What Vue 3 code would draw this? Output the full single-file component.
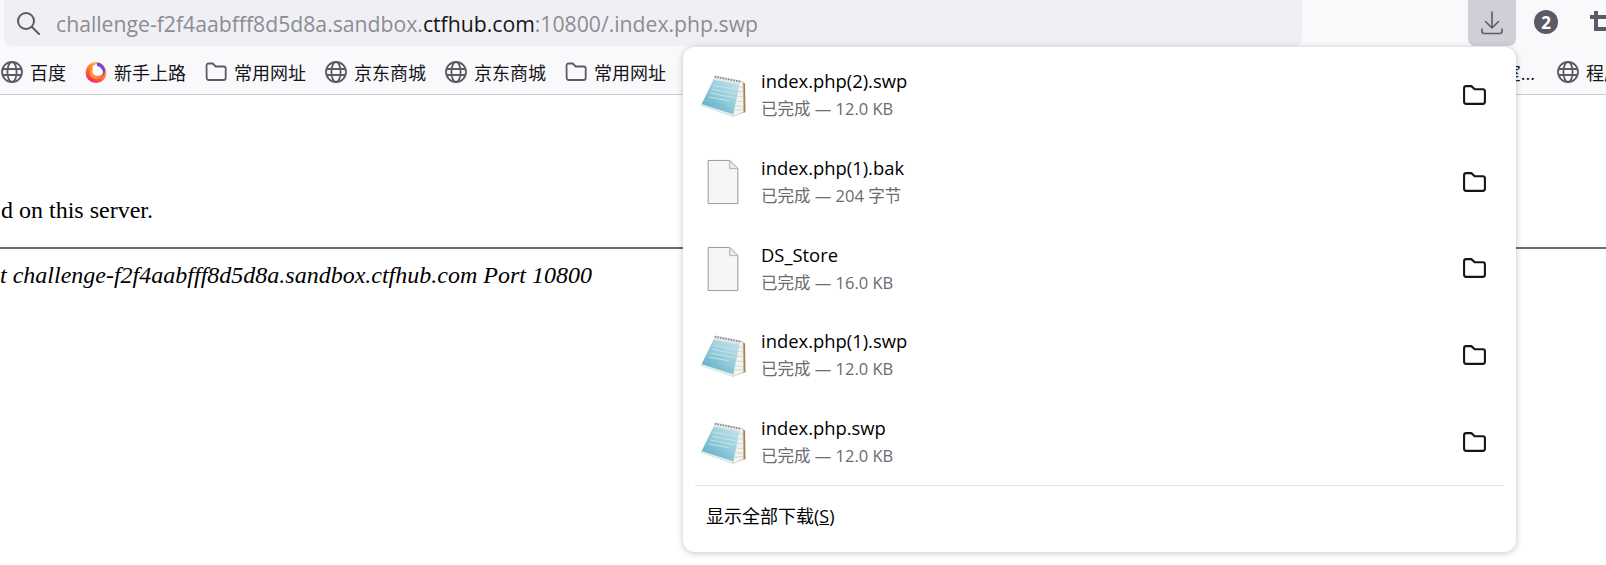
<template>
  <div class="page">
    <header class="toolbar">
      <div class="urlbar">
        <svg class="search" viewBox="0 0 24 24" fill="none" stroke="#5b5b66" stroke-width="2" stroke-linecap="round">
          <circle cx="10" cy="10" r="8" />
          <path d="M16 16 23 23" />
        </svg>
        <span class="url">challenge-f2f4aabfff8d5d8a.sandbox.<b>ctfhub.com</b>:10800/.index.php.swp</span>
      </div>
      <button type="button" class="dl-btn" aria-label="下载">
        <svg viewBox="0 0 24 24" fill="none" stroke="#5b5b66" stroke-width="1.6" stroke-linecap="round" stroke-linejoin="round">
          <path d="M12 1v16M5.500 10.500 12 17l6.500-6.500" />
          <path d="M2 18v2.500a2 2 0 0 0 2 2h16a2 2 0 0 0 2-2V18" />
        </svg>
      </button>
      <span class="badge">2</span>
      <svg class="crop" viewBox="0 0 24 24" fill="none" stroke="#5b5b66" stroke-width="4">
        <path d="M6 0v18h18M0 6h18v18" />
      </svg>
    </header>

    <nav class="bookmarks">
      <a v-for="b in bookmarks" :key="b.id" class="bm" :class="b.cls">
        <svg v-if="b.icon === 'globe'" class="bm-icon" viewBox="0 0 22 22" fill="none" stroke="#5b5b66" stroke-width="1.8">
          <circle cx="11" cy="11" r="10" />
          <ellipse cx="11" cy="11" rx="4.600" ry="10" />
          <path d="M1.500 8h19M1.500 14h19" />
        </svg>
        <svg v-else-if="b.icon === 'folder'" class="bm-icon" viewBox="0 0 22 22" fill="none" stroke="#5b5b66" stroke-width="1.8" stroke-linejoin="round">
          <path d="M1.500 4.500a2 2 0 0 1 2-2h4.200l3 3h8a2 2 0 0 1 2 2v9.500a2 2 0 0 1-2 2h-15a2 2 0 0 1-2-2z" />
        </svg>
        <svg v-else-if="b.icon === 'firefox'" class="bm-icon" viewBox="0 0 22 22">
          <defs>
            <linearGradient id="fx" x1="0.8" y1="0" x2="0.2" y2="1">
              <stop offset="0" stop-color="#ffd23c" />
              <stop offset="0.55" stop-color="#ff7139" />
              <stop offset="1" stop-color="#f5156c" />
            </linearGradient>
          </defs>
          <circle cx="11" cy="11.500" r="10.500" fill="url(#fx)" />
          <circle cx="12.500" cy="9" r="6" fill="#fff" />
          <path d="M12 1.500a8.500 8.500 0 0 1 8 9.500 8 8 0 0 1-3.500 5.500 7 7 0 0 0 .5-8 6.500 6.500 0 0 0-5-3.500z" fill="#7542e5" />
          <path d="M7.500 11a5.500 5.500 0 0 0 9 3.500 6.500 6.500 0 0 1-11 .5A7 7 0 0 1 8 6z" fill="#ff9a2e" />
        </svg>
        <span>{{ b.label }}</span>
      </a>
    </nav>

    <main class="content">
      <p class="msg">d on this server.</p>
      <hr class="rule" />
      <address class="addr">t challenge-f2f4aabfff8d5d8a.sandbox.ctfhub.com Port 10800</address>
    </main>

    <section class="panel">
      <ul class="list">
        <li v-for="f in files" :key="f.name" class="row">
          <svg v-if="f.kind === 'note'" class="file-icon" viewBox="0 0 48 48">
            <defs>
              <linearGradient id="np" x1="0" y1="1" x2="0.8" y2="0">
                <stop offset="0" stop-color="#4fa3bd" />
                <stop offset="0.55" stop-color="#93cbdb" />
                <stop offset="1" stop-color="#c6e4ec" />
              </linearGradient>
            </defs>
            <path d="M42 9 47 12 47.500 42 38 44z" fill="#a8814a" />
            <path d="M41 9 45 11 45.500 42 34 46.500z" fill="#f4f4ef" stroke="#b9b9b0" stroke-width="0.6" />
            <path d="M40 15 45 16M39 20 45 21M38 25 45 26M37 30 45 31M36 35 45 36M35.500 40 45 39" stroke="#c3d0d5" stroke-width="0.8" />
            <path d="M16 4 42 9 34 46.500 1 35z" fill="url(#np)" />
            <path d="M1 35 34 46.500 34.500 44 1.500 33.500z" fill="#e4eef0" />
            <path d="M15.500 3.500 42.500 8.500 41 13 14 8z" fill="#e3e6e6" />
            <path d="M15.500 5 42 10" stroke="#6e7a80" stroke-width="1.600" stroke-dasharray="1.500 1.300" />
            <path d="M14 14 39 18.500M12.500 18 38 23M11 22 37 27M9 26 30 30" stroke="#c4e4ec" stroke-width="1" />
          </svg>
          <svg v-else class="file-icon" viewBox="0 0 48 48">
            <path d="M8.500 1.500H31L39.500 10v36.500h-31z" fill="#f5f6f8" stroke="#959595" />
            <path d="M31 1.500V10h8.500z" fill="#ececec" stroke="#b0b0b0" />
          </svg>
          <div class="info">
            <div class="name">{{ f.name }}</div>
            <div class="meta">已完成 — {{ f.size }}</div>
          </div>
          <svg class="open" viewBox="0 0 24 24" fill="none" stroke="#15141a" stroke-width="2" stroke-linejoin="round">
            <path d="M2 5a2 2 0 0 1 2-2h5l3.200 3H20a2 2 0 0 1 2 2v10a2 2 0 0 1-2 2H4a2 2 0 0 1-2-2z" />
          </svg>
        </li>
      </ul>
      <div class="footer">显示全部下载(<u>S</u>)</div>
    </section>
  </div>
</template>

<script setup>
const bookmarks = [
  { id: 1, icon: 'globe', label: '百度' },
  { id: 2, icon: 'firefox', label: '新手上路' },
  { id: 3, icon: 'folder', label: '常用网址' },
  { id: 4, icon: 'globe', label: '京东商城' },
  { id: 5, icon: 'globe', label: '京东商城' },
  { id: 6, icon: 'folder', label: '常用网址' },
  { id: 7, icon: 'none', label: '工作室...', cls: 'tail' },
  { id: 8, icon: 'globe', label: '程序员导航', cls: 'far' },
]

const files = [
  { name: 'index.php(2).swp', size: '12.0 KB', kind: 'note' },
  { name: 'index.php(1).bak', size: '204 字节', kind: 'blank' },
  { name: 'DS_Store', size: '16.0 KB', kind: 'blank' },
  { name: 'index.php(1).swp', size: '12.0 KB', kind: 'note' },
  { name: 'index.php.swp', size: '12.0 KB', kind: 'note' },
]
</script>

<style>
html,
body {
  margin: 0;
  background: #fff;
  overflow: hidden;
}
</style>

<style scoped>
.page {
  position: relative;
  width: 1606px;
  height: 565px;
  overflow: hidden;
  background: #fff;
  font-family: "Open Sans", "Noto Sans CJK SC", sans-serif;
}

.toolbar {
  display: flex;
  align-items: flex-start;
  height: 46px;
  padding-left: 4px;
  background: #f9f9fb;
}
.urlbar {
  display: flex;
  flex: none;
  align-items: center;
  width: 1298px;
  height: 46px;
  border-radius: 0 0 7px 7px;
  background: #f0f0f4;
}
.search {
  width: 24px;
  height: 24px;
  margin-left: 12px;
}
.url {
  margin-left: 16px;
  color: #8c8c94;
  font-size: 21.200px;
  white-space: nowrap;
}
.url b {
  color: #15141a;
  font-weight: 400;
}
.dl-btn {
  display: flex;
  flex: none;
  align-items: center;
  justify-content: center;
  width: 48px;
  height: 46px;
  margin-left: 166px;
  padding: 0;
  border: 0;
  border-radius: 0 0 7px 7px;
  background: #cfcfd8;
}
.dl-btn svg {
  width: 24px;
  height: 24px;
}
.badge {
  display: flex;
  flex: none;
  align-items: center;
  justify-content: center;
  width: 24px;
  height: 24px;
  margin: 10px 0 0 18px;
  border-radius: 50%;
  background: #5b5b66;
  color: #fff;
  font-size: 17px;
  font-weight: 700;
}
.crop {
  flex: none;
  width: 24px;
  height: 24px;
  margin: 11px 0 0 32px;
}

.bookmarks {
  display: flex;
  align-items: center;
  gap: 19px;
  box-sizing: border-box;
  height: 49px;
  padding: 4px 0 0 1px;
  border-bottom: 1px solid #ccccd0;
  background: #f9f9fb;
  white-space: nowrap;
  overflow: hidden;
}
.bm {
  display: flex;
  flex: none;
  align-items: center;
  gap: 7px;
  color: #15141a;
  font-size: 18px;
}
.bm.tail {
  margin-left: auto;
}
.bm.far {
  margin-left: 3px;
  margin-right: -70px;
}
.bm-icon {
  width: 22px;
  height: 22px;
}

.content {
  font-family: "Liberation Serif", serif;
  color: #000;
}
.msg {
  margin: 102px 0 0 1px;
  font-size: 24px;
  line-height: 27px;
}
.rule {
  height: 2px;
  margin: 23px 0 0;
  border: 0;
  background: #6b6b6b;
}
.addr {
  margin: 13px 0 0;
  font-size: 24px;
  font-style: italic;
  line-height: 27px;
}

.panel {
  position: absolute;
  top: 47px;
  left: 683px;
  width: 833px;
  height: 505px;
  border-radius: 12px;
  background: #fff;
  box-shadow: 0 1px 6px rgba(58, 57, 68, 0.3);
}
.list {
  margin: 0;
  padding: 5px 0 0;
  list-style: none;
}
.row {
  display: flex;
  align-items: center;
  height: 86.700px;
  padding: 0 29px 0 17px;
}
.file-icon {
  flex: none;
  width: 46px;
  height: 46px;
}
.info {
  flex: 1;
  margin-left: 15px;
  padding-bottom: 2px;
}
.name {
  color: #000;
  font-size: 18.400px;
  line-height: 26px;
}
.meta {
  margin-top: 4px;
  color: #6b6b70;
  font-size: 16.500px;
  line-height: 22px;
}
.open {
  width: 25px;
  height: 25px;
}
.footer {
  padding: 17px 11px 0;
  margin: 0 12px;
  border-top: 1px solid #e0e0e2;
  color: #000;
  font-size: 18px;
  line-height: 26px;
}
</style>
